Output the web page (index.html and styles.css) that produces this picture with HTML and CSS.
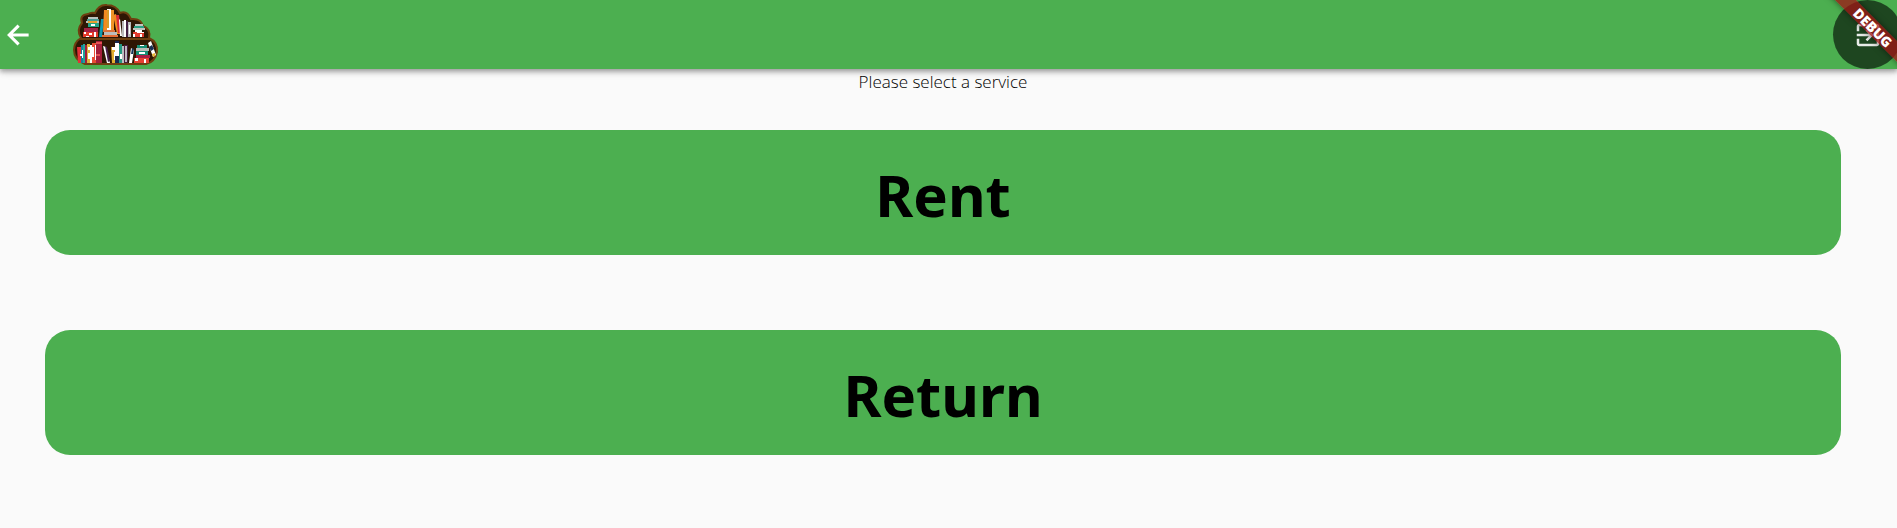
FILE: index.html
```html
<!DOCTYPE html>
<html lang="en">
<head>
<meta charset="utf-8">
<meta name="viewport" content="width=device-width, initial-scale=1">
<title>Library services</title>
<link rel="stylesheet" href="styles.css">
</head>
<body>
<header class="app-bar">
  <button class="back" type="button" aria-label="Back">
    <svg viewBox="0 0 24 24" width="30" height="30" fill="none" stroke="#fff" stroke-width="2.5"><path d="M20.500 12H5M12.500 4.500 5 12l7.500 7.500"/></svg>
  </button>
  <svg class="logo" viewBox="0 0 96 68" width="96" height="68" role="img" aria-label="Bookshelf">
    <path d="M13 37Q8 29 14 22Q11 14 20 13Q23 11 27 12Q31 3 39 4Q48 4 52 12Q59 9 63 18Q73 17 75 25Q83 28 81 37Q90 41 89 51Q87 61 78 63H17Q6 59 6 49Q6 41 13 37Z" fill="#2e1704" stroke="#6e3f10" stroke-width="2"/>
    <path d="M12 38H82" stroke="#6e3f10" stroke-width="2"/>
    <g>
      <path d="M20 16h10v2H20zM18 20h13v2H18z" fill="#b9c2bd"/><path d="M19 18h12v2H19z" fill="#4a9b91"/><path d="M20 20h9v2h-9z" fill="#e6a12d"/><path d="M20 22h11v4H20z" fill="#24a386"/><path d="M23 23h4v2h-4z" fill="#fff"/>
      <path d="M16 27h14v4H16z" fill="#a42244"/><path d="M15 31h15v5H15z" fill="#e43a2b"/><path d="M16 31h2v2h-2zM21 32h3v2h-3zM26 31h2v5h-2zM18 35h3v1h-3z" fill="#fff"/>
      <path d="M33 18h3l-2 18h-3z" fill="#129bb0"/><path d="M36 9h3v21h-4z" fill="#f18b20"/><path d="M39 8h4v21h-4z" fill="#fff"/><path d="M39 9h2v18h-2z" fill="#d99b27"/><path d="M43 9h3v20h-3z" fill="#ef9428"/>
      <path d="m45 14 3-1 5 20h-4z" fill="#f18b20"/><path d="M48 14h3l2 18h-3z" fill="#da2d35"/><path d="m51 19 1-1 2 17h-2z" fill="#fff"/><path d="M35 29h12v2H35z" fill="#dd713b"/><path d="M36 31h13v3H36z" fill="#bcbdbc"/><path d="M34 34h16v2H34z" fill="#e66e36"/>
      <path d="M54 20h2v16h-2zM60 21h3v15h-3z" fill="#bababb"/><path d="M56 19h2v17h-2z" fill="#fff"/><path d="M58 20h2v16h-2z" fill="#442043"/><path d="M61 24h1v9h-1z" fill="#fff"/>
      <path d="M67 23h8v2h-8zM65 27h12v2H65z" fill="#c3c5bf"/><path d="M66 25h10v2H66z" fill="#2ba084"/><path d="M67 29h7v2h-7z" fill="#fff"/><path d="M65 31h11v5H65z" fill="#e23a2d"/><path d="M69 31h7v1h-7zM65 33h2v3h-2zM72 33h2v3h-2z" fill="#fff"/>
    </g>
    <g>
      <path d="M9 46h4v16h-3z" fill="#e43038"/><path d="M13 44h2v18h-2z" fill="#147f9b"/><path d="M15 43h2v19h-2z" fill="#20a397"/><path d="M12 53h2v2h-2zM14 49h1v8h-1z" fill="#fff"/>
      <path d="M17 44h2v18h-2z" fill="#a31b3b"/><path d="M19 43h3v19h-3z" fill="#ddb23b"/><path d="M20 46h2v3h-2zM20 52h2v6h-2z" fill="#fff"/><path d="M22 44h2v18h-2z" fill="#fff"/><path d="M24 42h4v20h-4z" fill="#e84c36"/><path d="M24 46h2v10h-2z" fill="#fff"/><path d="M28 40h6v22h-6z" fill="#a41e3b"/><path d="M28 41h6v2h-6zM28 53h4v2h-4z" fill="#e35054"/><path d="M27 44h1v15h-1z" fill="#fff"/>
      <path d="m35 45 3 1 4 16h-3z" fill="#fff"/><path d="m37 45 2 1 3 14-2 1z" fill="#46204c"/><path d="M43 46h4v16h-3z" fill="#e1ae31"/><path d="M44 46h3v3h-3zM46 51h1v8h-1z" fill="#fff"/>
      <path d="M47 40h4v22h-4z" fill="#17284e"/><path d="M47 42h4v13h-4z" fill="#fff"/><path d="M51 43h3v19h-3z" fill="#249982"/><path d="M52 53h2v5h-2z" fill="#fff"/><path d="M54 45h2v17h-2z" fill="#bebcc0"/><path d="M56 44h4v18h-4z" fill="#481c3f"/><path d="M57 45h2v16h-2z" fill="#bcb8c0"/>
      <path d="m63 47 3 2-2 13h-3z" fill="#fff"/><path d="m64 47 2 1-1 5h-2z" fill="#153559"/>
      <path d="M69 44h10v3H69zM68 50h12v4H68z" fill="#168f76"/><path d="M68 47h13v3H68z" fill="#b8bdb8"/><path d="M72 44h4v1h-4zM71 51h6v2h-6zM70 57h8v2h-8z" fill="#fff"/><path d="M68 54h14v3H68z" fill="#a81d42"/><path d="M66 57h15v5H66z" fill="#e54131"/><path d="M67 57h3v3h-3zM76 58h2v4h-2z" fill="#fff"/>
      <path d="m80 42 3-2 5 14-3 2z" fill="#fff"/><path d="m81 46 3-2 2 4-3 2z" fill="#183154"/><path d="m84 53 3-1v3l-2 1z" fill="#ebb535"/>
    </g>
  </svg>
  <button class="exit" type="button" aria-label="Log out">
    <svg viewBox="0 0 24 24" width="30" height="30" fill="#e8ece8"><path d="M10.090 15.590 11.500 17l5-5-5-5-1.410 1.410L12.670 11H3v2h9.670zM19 3H5c-1.110 0-2 .9-2 2v4h2V5h14v14H5v-4H3v4c0 1.100.89 2 2 2h14c1.100 0 2-.9 2-2V5c0-1.100-.9-2-2-2z"/></svg>
  </button>
</header>
<div class="banner-clip"><span class="banner">DEBUG</span></div>
<main class="services">
  <p class="prompt">Please select a service</p>
  <button class="service" type="button">Rent</button>
  <button class="service" type="button">Return</button>
</main>
</body>
</html>
```
FILE: styles.css
```css
* { box-sizing: border-box; }
body {
  margin: 0;
  min-height: 100vh;
  background: #fafafa;
  color: #000;
  font-family: "Open Sans", "Noto Sans", sans-serif;
}
button { border: 0; padding: 0; font: inherit; cursor: pointer; }
.app-bar {
  position: relative;
  display: flex;
  align-items: center;
  height: 69px;
  overflow-x: clip;
  overflow-y: visible;
  background: #4caf50;
  box-shadow: 0 2px 4px rgba(0,0,0,.2), 0 4px 5px rgba(0,0,0,.14), 0 1px 10px rgba(0,0,0,.12);
}
.back { display: flex; margin-left: 3px; background: none; }
.logo { margin-left: 35px; }
.exit {
  display: flex;
  align-items: center;
  justify-content: center;
  width: 69px;
  height: 69px;
  margin-left: auto;
  margin-right: -5px;
  border-radius: 50%;
  background: #1e4620;
}
.banner-clip {
  position: absolute;
  top: 0;
  right: 0;
  width: 80px;
  height: 80px;
  overflow: hidden;
  pointer-events: none;
}
.banner {
  position: absolute;
  top: 20px;
  right: -36px;
  width: 120px;
  height: 15px;
  transform: rotate(45deg);
  background: rgba(160,20,20,.75);
  box-shadow: 0 0 6px rgba(0,0,0,.5);
  color: #fff;
  font-size: 14px;
  font-weight: 800;
  line-height: 15px;
  text-align: center;
}
.services {
  display: flex;
  flex-direction: column;
  padding: 1px 56px 72px 45px;
}
.prompt {
  margin: 0 0 36px;
  font-size: 17px;
  font-weight: 300;
  line-height: 24px;
  text-align: center;
}
.service {
  height: 125px;
  padding-top: 3px;
  border-radius: 25px;
  background: #4caf50;
  color: #000;
  font-family: "Noto Sans", "Open Sans", sans-serif;
  font-size: 58px;
  font-weight: 700;
}
.service + .service { margin-top: 75px; }
```
